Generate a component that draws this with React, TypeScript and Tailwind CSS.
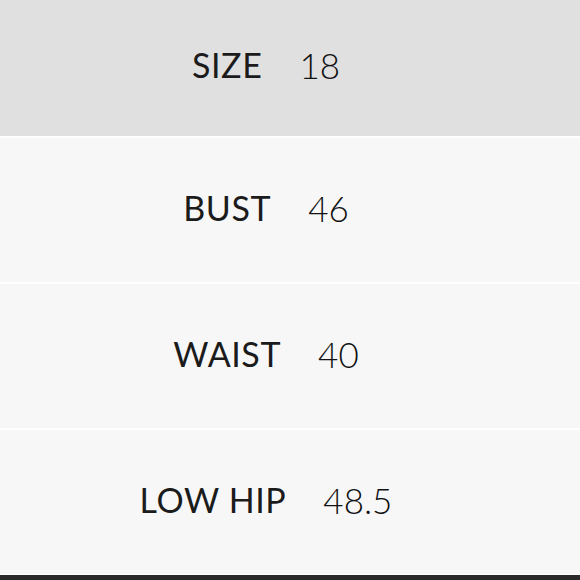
const rows = [
  { label: 'SIZE', value: '18', first: true },
  { label: 'BUST', value: '46' },
  { label: 'WAIST', value: '40' },
  { label: 'LOW HIP', value: '48.5' },
];

export default function App() {
  return (
    <div
      className="w-[580px] h-[580px] bg-white flex flex-col overflow-hidden"
      style={{ fontFamily: 'Lato, "Noto Sans", sans-serif' }}
    >
      <div className="flex flex-col gap-[2px]">
        {rows.map((r) => (
          <div
            key={r.label}
            className={
              r.first
                ? 'h-[136px] bg-[#e0e0e0] flex items-center justify-center pr-[48px] pb-[6px] gap-[37px]'
                : 'h-[144px] bg-[#f7f7f7] flex items-center justify-center pr-[48px] pb-[4px] gap-[37px]'
            }
          >
            <span className="text-[34px] leading-none text-[#1b1b1b] tracking-[0.6px]">{r.label}</span>
            <span className="text-[35px] leading-none font-light text-[#111]">{r.value}</span>
          </div>
        ))}
      </div>
      <div className="mt-px flex-1 bg-[#2b2b2b]" />
    </div>
  );
}
